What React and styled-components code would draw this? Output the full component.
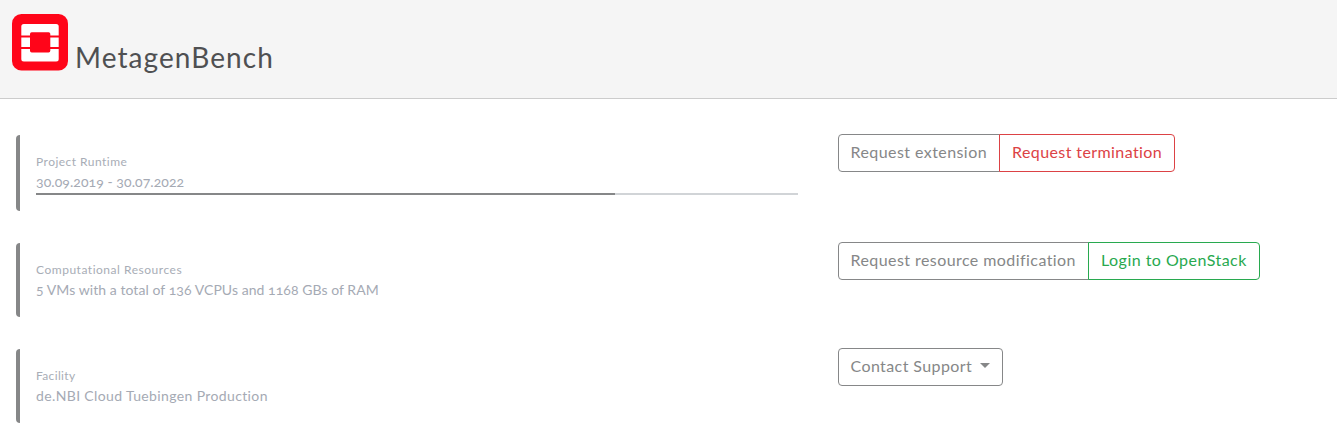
import React from "react";
import styled, { createGlobalStyle } from "styled-components";

const GlobalStyle = createGlobalStyle`
  *, *::before, *::after { box-sizing: border-box; }
  body {
    margin: 0;
    background: #fff;
    font-family: Lato, "Open Sans", sans-serif;
    overflow: hidden;
  }
`;

const Header = styled.header`
  display: flex;
  align-items: flex-start;
  height: 99px;
  padding: 14px 12px 0;
  background: #f5f5f5;
  border-bottom: 1px solid #ccc;
`;

const Logo = styled.svg`
  flex: none;
  width: 56px;
  height: 57px;
`;

const Title = styled.h1`
  margin: 26px 0 0 7px;
  color: #4f5052;
  font-size: 28px;
  font-weight: 400;
  line-height: 34px;
  letter-spacing: ${(p) => p.$spacing}px;
  white-space: nowrap;
`;

const Main = styled.main`
  display: grid;
  grid-template-columns: 782px 1fr;
  column-gap: 40px;
  row-gap: 32px;
  padding: 36px 16px 0;
  grid-template-rows: 76px 74px 74px;
`;

const Callout = styled.section`
  padding: 18px 0 0 16px;
  border-left: 4px solid #868788;
  border-radius: 4px 0 0 4px;
`;

const Label = styled.div`
  color: #a8adb6;
  font-size: 12px;
  line-height: 18px;
  letter-spacing: ${(p) => p.$spacing}px;
  white-space: nowrap;
`;

const Value = styled.div`
  margin-bottom: 1px;
  color: #a5aab4;
  font-size: 14px;
  font-variant-numeric: oldstyle-nums;
  line-height: 21px;
  letter-spacing: ${(p) => p.$spacing}px;
  white-space: nowrap;
`;

const Progress = styled.div`
  height: 2px;
  background: #d1d4d7;
`;

const ProgressFill = styled.div`
  height: 100%;
  background: #868788;
`;

const Actions = styled.div`
  display: flex;
  align-items: flex-start;
  margin-top: -1px;
`;

const tones = { neutral: "#868788", danger: "#dc4245", success: "#28a94f" };

const Button = styled.button`
  position: relative;
  display: flex;
  align-items: center;
  width: ${(p) => p.$width}px;
  height: 38px;
  margin: 0;
  padding: 0 0 2px 11.5px;
  color: ${(p) => tones[p.$tone]};
  background: transparent;
  border: 1px solid currentColor;
  border-radius: 4px;
  font-family: inherit;
  font-size: 16px;
  line-height: 24px;
  letter-spacing: ${(p) => p.$spacing}px;
  white-space: nowrap;

  &:not(:last-child) {
    border-top-right-radius: 0;
    border-bottom-right-radius: 0;
  }
  & + & {
    margin-left: -1px;
    padding-left: 12px;
    border-top-left-radius: 0;
    border-bottom-left-radius: 0;
  }
`;

const Caret = styled.span`
  margin: 0 0 1px 7.5px;
  border: 5px solid transparent;
  border-top-color: currentColor;
  border-bottom: 0;
`;

const projects = [
  {
    label: "Project Runtime", labelSpacing: 0.47,
    value: "30.09.2019 - 30.07.2022", valueSpacing: 0.07,
    progress: 76,
    actions: [
      { text: "Request extension", tone: "neutral", width: 162, spacing: 0.43 },
      { text: "Request termination", tone: "danger", width: 176, spacing: 0.41 },
    ],
  },
  {
    label: "Computational Resources", labelSpacing: 0.52,
    value: "5 VMs with a total of 136 VCPUs and 1168 GBs of RAM", valueSpacing: 0.065,
    actions: [
      { text: "Request resource modification", tone: "neutral", width: 251, spacing: 0.43 },
      { text: "Login to OpenStack", tone: "success", width: 172, spacing: 0.47 },
    ],
  },
  {
    label: "Facility", labelSpacing: 0.35,
    value: "de.NBI Cloud Tuebingen Production", valueSpacing: 0.37,
    actions: [
      { text: "Contact Support", tone: "neutral", width: 165, spacing: 0.4, menu: true },
    ],
  },
];

export default function App() {
  return (
    <>
      <GlobalStyle />
      <Header>
        <Logo viewBox="0 0 56 57" aria-hidden="true">
          <rect width="56" height="56.5" rx="9.5" fill="#ff0519" />
          <rect x="9.3" y="10" width="37.4" height="37.5" rx="2.5" fill="#fff" />
          <path d="M9 22.6H47M9 33.9H47" stroke="#ff0519" strokeWidth="2" />
          <rect x="18" y="18.3" width="20.3" height="20.2" rx="1.7" fill="#ff0519" />
        </Logo>
        <Title $spacing={1.08}>MetagenBench</Title>
      </Header>
      <Main>
        {projects.map((item) => (
          <React.Fragment key={item.label}>
            <Callout>
              <Label $spacing={item.labelSpacing}>{item.label}</Label>
              <Value $spacing={item.valueSpacing}>{item.value}</Value>
              {item.progress && (
                <Progress>
                  <ProgressFill style={{ width: `${item.progress}%` }} />
                </Progress>
              )}
            </Callout>
            <Actions>
              {item.actions.map((action) => (
                <Button
                  key={action.text}
                  $tone={action.tone}
                  $width={action.width}
                  $spacing={action.spacing}
                >
                  {action.text}
                  {action.menu && <Caret />}
                </Button>
              ))}
            </Actions>
          </React.Fragment>
        ))}
      </Main>
    </>
  );
}
